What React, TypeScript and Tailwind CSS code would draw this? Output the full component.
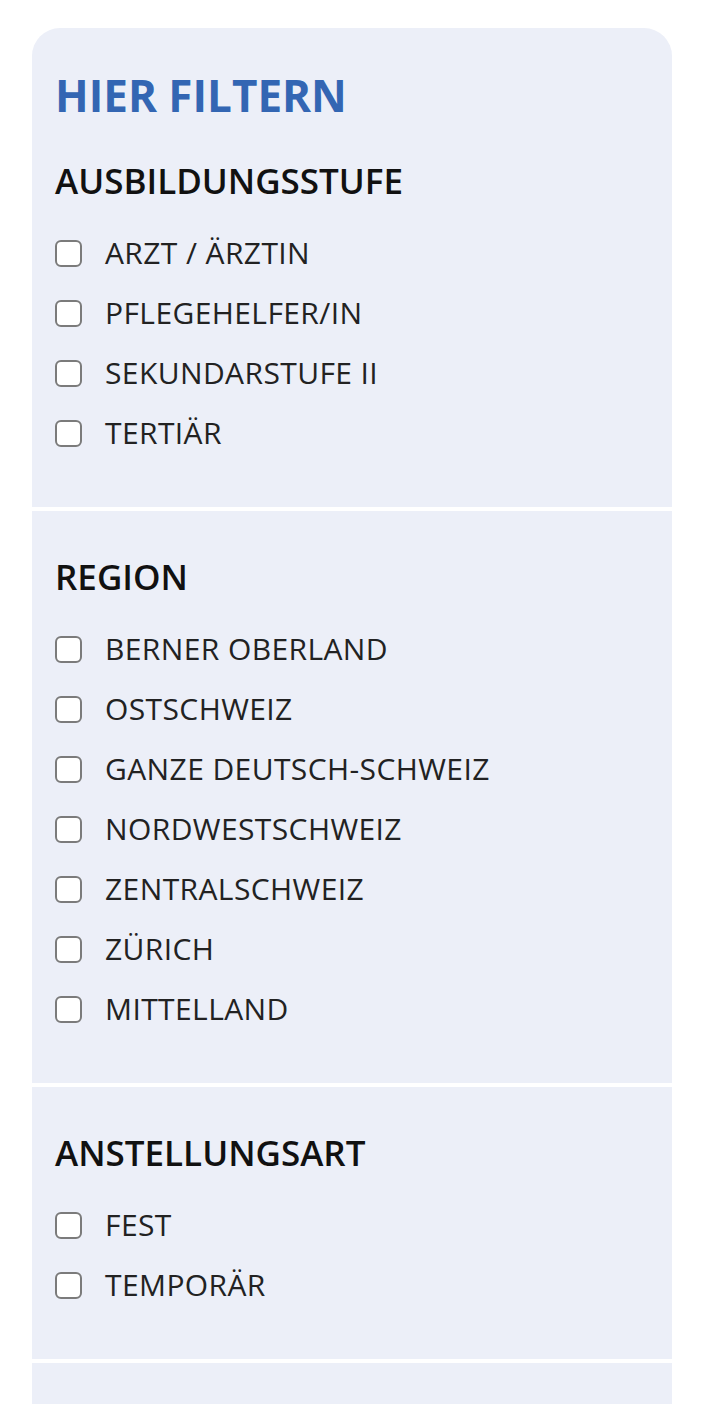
import React from 'react';

interface FilterGroup {
  title: string;
  options: string[];
}

const groups: FilterGroup[] = [
  {
    title: 'Ausbildungsstufe',
    options: ['Arzt / Ärztin', 'Pflegehelfer/in', 'Sekundarstufe II', 'Tertiär'],
  },
  {
    title: 'Region',
    options: [
      'Berner Oberland',
      'Ostschweiz',
      'Ganze Deutsch-Schweiz',
      'Nordwestschweiz',
      'Zentralschweiz',
      'Zürich',
      'Mittelland',
    ],
  },
  {
    title: 'Anstellungsart',
    options: ['Fest', 'Temporär'],
  },
];

function Option({ label }: { label: string }) {
  return (
    <label className="flex items-center h-[60px] cursor-pointer">
      <span className="w-[27px] h-[27px] shrink-0 rounded-[6px] border-2 border-[#7b7b7b] bg-white" />
      <span className="ml-[23px] text-[30px] leading-[30px] tracking-[0.4px] uppercase text-[#222222]">{label}</span>
    </label>
  );
}

function Group({ group, first }: { group: FilterGroup; first?: boolean }) {
  return (
    <section className={`bg-[#eceff8] px-[23px] pb-[44px] ${first ? 'pt-[45px] rounded-t-[28px]' : 'pt-[49px]'}`}>
      {first && (
        <h2 className="text-[44px] leading-[44px] font-bold uppercase text-[#3366b3] mb-[47px]">Hier filtern</h2>
      )}
      <h3 className="text-[35px] leading-[34px] font-semibold uppercase text-[#111111] mb-[25px]">{group.title}</h3>
      <div className="flex flex-col">
        {group.options.map((o) => (
          <Option key={o} label={o} />
        ))}
      </div>
    </section>
  );
}

export default function App() {
  return (
    <div className="min-h-screen bg-white pt-[28px] pl-[32px]" style={{ fontFamily: '"Open Sans", sans-serif' }}>
      <div className="w-[640px] flex flex-col gap-[4px]">
        {groups.map((g, i) => (
          <Group key={g.title} group={g} first={i === 0} />
        ))}
        <section className="bg-[#eceff8] h-[120px]" />
      </div>
    </div>
  );
}
